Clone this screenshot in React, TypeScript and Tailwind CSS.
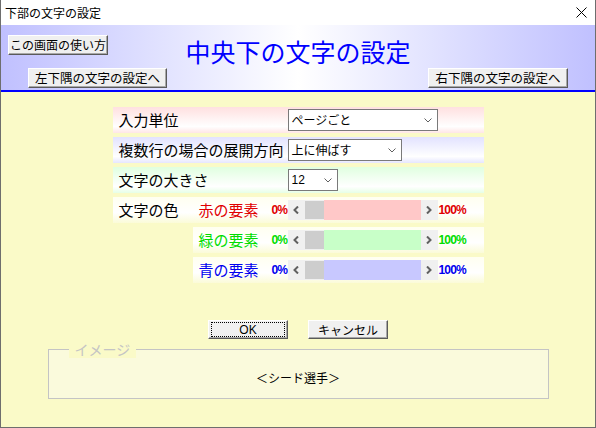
import type { ReactNode } from "react";

const jp = "font-['Noto_Sans_CJK_JP','Noto_Sans',sans-serif]";
const latin = "font-['Liberation_Sans','Noto_Sans_CJK_JP',sans-serif]";

function Btn({ children, className = "", focus = false }: { children: ReactNode; className?: string; focus?: boolean }) {
  return (
    <div
      className={`flex items-center justify-center bg-[#f0f0f0] border border-t-white border-l-white border-r-[#5a5a5a] border-b-[#5a5a5a] shadow-[inset_-1px_-1px_0_#a8a8a8] text-black ${className}`}
    >
      {focus ? (
        <span className="flex h-[13px] w-[72px] items-center justify-center outline-1 outline-dotted outline-black">
          {children}
        </span>
      ) : (
        children
      )}
    </div>
  );
}

function Chevron() {
  return (
    <svg width="8" height="5" viewBox="0 0 8 5">
      <polyline points="0.5,0.5 4,4 7.5,0.5" fill="none" stroke="#606060" strokeWidth="1" />
    </svg>
  );
}

function Select({ value, width, className = "" }: { value: string; width: string; className?: string }) {
  return (
    <div
      className={`flex h-[22px] items-center justify-between border border-[#7a7a7a] bg-white pl-[3px] pr-[5px] text-[12px] leading-none text-black ${width} ${className}`}
    >
      <span>{value}</span>
      <Chevron />
    </div>
  );
}

function Arrow({ dir }: { dir: "l" | "r" }) {
  return (
    <svg width="6" height="8" viewBox="0 0 6 8">
      <polyline
        points={dir === "l" ? "5,0.5 1.5,4 5,7.5" : "1,0.5 4.5,4 1,7.5"}
        fill="none"
        stroke="#606060"
        strokeWidth="2"
      />
    </svg>
  );
}

function ScrollBar({ track }: { track: string }) {
  return (
    <div className="flex h-[20px] w-[150px] items-stretch bg-[#f0f0f0]">
      <div className="flex w-[17px] items-center justify-center">
        <Arrow dir="l" />
      </div>
      <div className="my-[1px] w-[19px] bg-[#cdcdcd]" />
      <div className={`w-[97px] ${track}`} />
      <div className="flex w-[17px] items-center justify-center">
        <Arrow dir="r" />
      </div>
    </div>
  );
}

const rowBase = "flex h-[26px] items-center bg-linear-to-b";

function ColorPart({ name, color, track, className = "" }: { name: string; color: string; track: string; className?: string }) {
  return (
    <div className={`flex h-[26px] w-[291px] items-center pl-[6px] ${className}`}>
      <span className={`w-[73px] text-[15px] ${color}`}>{name}</span>
      <span className={`w-[16px] ${latin} text-[12px] font-bold tracking-[-0.8px] ${color}`}>0%</span>
      <ScrollBar track={track} />
      <span className={`ml-[1px] ${latin} text-[12px] font-bold tracking-[-0.8px] ${color}`}>100%</span>
    </div>
  );
}

export default function App() {
  const yellowRow = "from-[#fffff0] via-white via-60% to-[#fbfbd8]";
  return (
    <div className={`flex h-[428px] w-[596px] flex-col overflow-hidden border-x border-b border-[#6e6e6e] bg-white ${jp}`}>
      {/* title bar */}
      <div className="flex h-[25px] items-center justify-between bg-white pl-[4px] pr-[8px]">
        <span className="text-[12px] text-black">下部の文字の設定</span>
        <svg width="11" height="11" viewBox="0 0 11 11">
          <path d="M0.5 0.5 L10.5 10.5 M10.5 0.5 L0.5 10.5" stroke="#000" strokeWidth="1" />
        </svg>
      </div>

      {/* header */}
      <div className="flex h-[67px] flex-col border-b-2 border-[#0000ff] bg-linear-to-r from-[#c0c0ff] via-white to-[#c0c0ff] pt-[10px]">
        <div className="grid grid-cols-[1fr_auto_1fr] items-start">
          <Btn className="ml-[7px] h-[20px] w-[100px] justify-self-start text-[12px]">この画面の使い方</Btn>
          <div className="mt-[1px] text-[25px] leading-[30px] text-[#0000ff]">中央下の文字の設定</div>
          <div />
        </div>
        <div className="mt-[2px] flex justify-between px-[27px]">
          <Btn className="h-[20px] w-[139px] text-[12.5px]">左下隅の文字の設定へ</Btn>
          <Btn className="h-[20px] w-[140px] text-[12.5px]">右下隅の文字の設定へ</Btn>
        </div>
      </div>

      {/* body */}
      <div className="flex flex-1 flex-col items-center bg-[#fafac8] pt-[15px]">
        <div className="flex w-[371px] flex-col gap-[4px] text-black">
          <div className={`${rowBase} from-[#ffe0e0] via-white via-75% to-[#ffe6e6]`}>
            <span className="w-[175px] pl-[6px] text-[15px]">入力単位</span>
            <Select value="ページごと" width="w-[150px]" />
          </div>
          <div className={`${rowBase} from-[#e2e2ff] via-white via-75% to-[#e6e6ff]`}>
            <span className="w-[175px] pl-[6px] text-[15px] whitespace-nowrap">複数行の場合の展開方向</span>
            <Select value="上に伸ばす" width="w-[114px]" />
          </div>
          <div className={`${rowBase} from-[#e0ffe0] via-white via-75% to-[#e6ffe6]`}>
            <span className="w-[175px] pl-[6px] text-[15px]">文字の大きさ</span>
            <Select value="12" width="w-[50px]" className={latin} />
          </div>
          <div className={`${rowBase} ${yellowRow}`}>
            <span className="w-[80px] pl-[6px] text-[15px]">文字の色</span>
            <ColorPart name="赤の要素" color="text-[#e00000]" track="bg-[#ffc8c8]" />
          </div>
          <ColorPart
            name="緑の要素"
            color="text-[#00dd00]"
            track="bg-[#c8ffc8]"
            className={`self-end bg-linear-to-b ${yellowRow}`}
          />
          <ColorPart
            name="青の要素"
            color="text-[#0000ee]"
            track="bg-[#c8c8ff]"
            className={`self-end bg-linear-to-b ${yellowRow}`}
          />
        </div>

        <div className="mt-[37px] flex gap-[20px]">
          <Btn focus className={`h-[19px] w-[80px] ${latin} text-[12px]`}>OK</Btn>
          <Btn className="h-[19px] w-[80px] text-[12px]">キャンセル</Btn>
        </div>

        <fieldset className="mt-[1px] w-[501px] border border-[#c4c4c4] bg-[#fafadc]">
          <legend className="ml-[20px] bg-[#fafac8] px-[6px] text-[14px] leading-[18px] text-[#c4c4c4]">イメージ</legend>
          <div className="flex h-[40px] items-center justify-center text-[12px] text-black">＜シード選手＞</div>
        </fieldset>
      </div>
    </div>
  );
}
